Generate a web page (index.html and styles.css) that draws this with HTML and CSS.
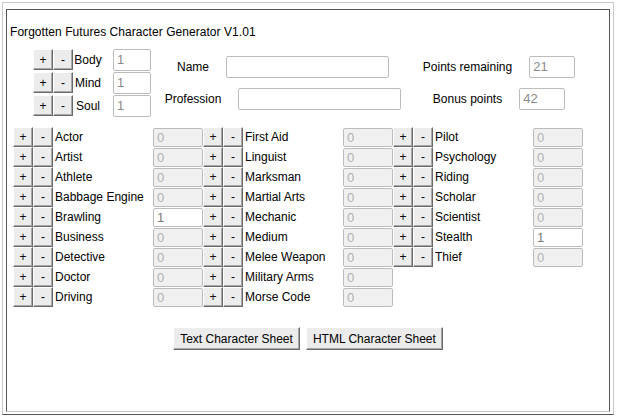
FILE: index.html
```html
<!DOCTYPE html>
<html>
<head>
<meta charset="utf-8">
<title>Forgotten Futures Character Generator</title>
<link rel="stylesheet" href="styles.css">
</head>
<body>
<div class="outer">
  <div class="inner">
    <h1 class="title">Forgotten Futures Character Generator V1.01</h1>

    <div class="top">
      <div class="stats">
        <div class="stat"><button class="pm">+</button><button class="pm">-</button><span class="stat-label">Body</span><input class="box stat-input" value="1" readonly></div>
        <div class="stat"><button class="pm">+</button><button class="pm">-</button><span class="stat-label">Mind</span><input class="box stat-input" value="1" readonly></div>
        <div class="stat"><button class="pm">+</button><button class="pm">-</button><span class="stat-label">Soul</span><input class="box stat-input" value="1" readonly></div>
      </div>

      <div class="ident">
        <div class="field"><span class="field-label">Name</span><input class="box text-input"></div>
        <div class="field"><span class="field-label">Profession</span><input class="box text-input"></div>
      </div>

      <div class="points">
        <div class="field"><span class="field-label">Points remaining</span><input class="box point-input" value="21" readonly></div>
        <div class="field"><span class="field-label">Bonus points</span><input class="box point-input" value="42" readonly></div>
      </div>
    </div>

    <div class="skills">
      <div class="skill"><button class="pm">+</button><button class="pm">-</button><span class="skill-label">Actor</span><input class="box skill-input off" value="0" readonly></div>
      <div class="skill"><button class="pm">+</button><button class="pm">-</button><span class="skill-label">Artist</span><input class="box skill-input off" value="0" readonly></div>
      <div class="skill"><button class="pm">+</button><button class="pm">-</button><span class="skill-label">Athlete</span><input class="box skill-input off" value="0" readonly></div>
      <div class="skill"><button class="pm">+</button><button class="pm">-</button><span class="skill-label">Babbage Engine</span><input class="box skill-input off" value="0" readonly></div>
      <div class="skill"><button class="pm">+</button><button class="pm">-</button><span class="skill-label">Brawling</span><input class="box skill-input" value="1" readonly></div>
      <div class="skill"><button class="pm">+</button><button class="pm">-</button><span class="skill-label">Business</span><input class="box skill-input off" value="0" readonly></div>
      <div class="skill"><button class="pm">+</button><button class="pm">-</button><span class="skill-label">Detective</span><input class="box skill-input off" value="0" readonly></div>
      <div class="skill"><button class="pm">+</button><button class="pm">-</button><span class="skill-label">Doctor</span><input class="box skill-input off" value="0" readonly></div>
      <div class="skill"><button class="pm">+</button><button class="pm">-</button><span class="skill-label">Driving</span><input class="box skill-input off" value="0" readonly></div>

      <div class="skill"><button class="pm">+</button><button class="pm">-</button><span class="skill-label">First Aid</span><input class="box skill-input off" value="0" readonly></div>
      <div class="skill"><button class="pm">+</button><button class="pm">-</button><span class="skill-label">Linguist</span><input class="box skill-input off" value="0" readonly></div>
      <div class="skill"><button class="pm">+</button><button class="pm">-</button><span class="skill-label">Marksman</span><input class="box skill-input off" value="0" readonly></div>
      <div class="skill"><button class="pm">+</button><button class="pm">-</button><span class="skill-label">Martial Arts</span><input class="box skill-input off" value="0" readonly></div>
      <div class="skill"><button class="pm">+</button><button class="pm">-</button><span class="skill-label">Mechanic</span><input class="box skill-input off" value="0" readonly></div>
      <div class="skill"><button class="pm">+</button><button class="pm">-</button><span class="skill-label">Medium</span><input class="box skill-input off" value="0" readonly></div>
      <div class="skill"><button class="pm">+</button><button class="pm">-</button><span class="skill-label">Melee Weapon</span><input class="box skill-input off" value="0" readonly></div>
      <div class="skill"><button class="pm">+</button><button class="pm">-</button><span class="skill-label">Military Arms</span><input class="box skill-input off" value="0" readonly></div>
      <div class="skill"><button class="pm">+</button><button class="pm">-</button><span class="skill-label">Morse Code</span><input class="box skill-input off" value="0" readonly></div>

      <div class="skill"><button class="pm">+</button><button class="pm">-</button><span class="skill-label">Pilot</span><input class="box skill-input off" value="0" readonly></div>
      <div class="skill"><button class="pm">+</button><button class="pm">-</button><span class="skill-label">Psychology</span><input class="box skill-input off" value="0" readonly></div>
      <div class="skill"><button class="pm">+</button><button class="pm">-</button><span class="skill-label">Riding</span><input class="box skill-input off" value="0" readonly></div>
      <div class="skill"><button class="pm">+</button><button class="pm">-</button><span class="skill-label">Scholar</span><input class="box skill-input off" value="0" readonly></div>
      <div class="skill"><button class="pm">+</button><button class="pm">-</button><span class="skill-label">Scientist</span><input class="box skill-input off" value="0" readonly></div>
      <div class="skill"><button class="pm">+</button><button class="pm">-</button><span class="skill-label">Stealth</span><input class="box skill-input" value="1" readonly></div>
      <div class="skill"><button class="pm">+</button><button class="pm">-</button><span class="skill-label">Thief</span><input class="box skill-input off" value="0" readonly></div>
    </div>

    <div class="actions">
      <button class="sheet-btn">Text Character Sheet</button>
      <button class="sheet-btn">HTML Character Sheet</button>
    </div>
  </div>
</div>
</body>
</html>
```

FILE: styles.css
```css
* { box-sizing: border-box; }

html, body {
  margin: 0;
  padding: 0;
  background: #ffffff;
}

body {
  font-family: "Liberation Sans", Arial, sans-serif;
  font-size: 12px;
  color: #000;
}

.outer {
  margin: 2px 0 0 2px;
  width: 612px;
  height: 413px;
  border: 1px solid;
  border-color: #c8c8c8 #c8c8c8 #555555 #c8c8c8;
  padding: 6px 3px 2px 3px;
}

.inner {
  height: 100%;
  border: 1px solid;
  border-color: #555555 #555555 #c8c8c8 #555555;
}

.title {
  margin: 15px 0 0 3px;
  font-size: 12px;
  font-weight: normal;
  line-height: 14px;
  letter-spacing: 0.05px;
}

/* top section */
.top {
  display: flex;
  align-items: center;
  margin-top: 9px;
  padding-left: 26px;
  height: 69px;
}

.stats {
  flex: 0 0 118px;
  display: flex;
  flex-direction: column;
}

.stat {
  display: flex;
  align-items: center;
  height: 23px;
}

.stat-label {
  width: 30px;
  margin-right: 10px;
  text-align: center;
}

.ident {
  flex: 0 0 264px;
  display: flex;
  flex-direction: column;
  align-items: center;
  gap: 10px;
}

.points {
  flex: 0 0 168px;
  display: flex;
  flex-direction: column;
  align-items: center;
  gap: 10px;
}

.field {
  display: flex;
  align-items: center;
  gap: 17px;
  height: 22px;
}

/* form controls */
.pm {
  width: 20px;
  height: 20px;
  padding: 0;
  margin: 0;
  font-family: "Liberation Sans", Arial, sans-serif;
  font-size: 12px;
  line-height: 16px;
  color: #000;
  background: #ececec;
  border: 1px solid;
  border-color: #ffffff #6a6a6a #6a6a6a #ffffff;
  box-shadow: inset -1px -1px 0 #a8a8a8;
  border-radius: 0;
}

.stat .pm { height: 21px; }

.box {
  margin: 0;
  font-family: "Liberation Sans", Arial, sans-serif;
  font-size: 13px;
  color: #8a8a8a;
  background: #fff;
  border: 1px solid #bcbcbc;
  border-radius: 2px;
  padding: 0 0 0 3px;
  outline: none;
}

.stat-input { width: 38px; height: 22px; }
.text-input { width: 163px; height: 22px; }
.point-input { width: 46px; height: 22px; }

/* skills */
.skills {
  display: grid;
  grid-template-columns: repeat(3, 190px);
  grid-template-rows: repeat(9, 20px);
  grid-auto-flow: column;
  margin: 10px 0 0 6px;
}

.skill {
  display: flex;
  align-items: center;
  height: 20px;
}

.skill-label {
  width: 100px;
  padding-left: 2px;
  white-space: nowrap;
}

.skill-input {
  width: 50px;
  height: 19px;
  color: #7a7a7a;
}

.skill-input.off {
  background: #f0f0f0;
  color: #b0b0b0;
}

/* actions */
.actions {
  display: flex;
  justify-content: center;
  gap: 6px;
  margin-top: 20px;
}

.sheet-btn {
  height: 23px;
  margin: 0;
  padding: 0 6px;
  font-family: "Liberation Sans", Arial, sans-serif;
  font-size: 12px;
  color: #000;
  background: #ececec;
  border: 1px solid;
  border-color: #ffffff #6a6a6a #6a6a6a #ffffff;
  box-shadow: inset -1px -1px 0 #a8a8a8;
  border-radius: 0;
}
```
